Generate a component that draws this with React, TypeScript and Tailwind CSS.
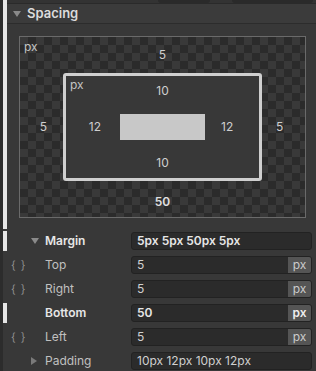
import React from 'react';

type Row = {
  label: string;
  value: string;
  unit?: boolean;
  active?: boolean;
  kind: 'group-open' | 'group-closed' | 'field';
};

const rows: Row[] = [
  { label: 'Margin', value: '5px 5px 50px 5px', kind: 'group-open', active: true },
  { label: 'Top', value: '5', unit: true, kind: 'field' },
  { label: 'Right', value: '5', unit: true, kind: 'field' },
  { label: 'Bottom', value: '50', unit: true, kind: 'field', active: true },
  { label: 'Left', value: '5', unit: true, kind: 'field' },
  { label: 'Padding', value: '10px 12px 10px 12px', kind: 'group-closed' },
];

const TriangleDown = () => (
  <svg width="8" height="6" viewBox="0 0 8 6">
    <polygon points="0,0 8,0 4,6" fill="#8a8a8a" />
  </svg>
);

const TriangleRight = () => (
  <svg width="6" height="8" viewBox="0 0 6 8">
    <polygon points="0,0 6,4 0,8" fill="#7a7a7a" />
  </svg>
);

const SpacingBox: React.FC = () => (
  <div className="ml-[12px] w-[287px] h-[182px] border border-[#6a6a6a] bg-[image:repeating-conic-gradient(#2b2b2b_0%_25%,#393939_0%_50%)] bg-[length:16px_16px] grid grid-cols-[43px_199px_43px] grid-rows-[36px_108px_36px] text-[12px] leading-4 text-[#cfcfcf]">
    <div className="pl-[4px] pt-[2px] text-[#c4c4c4]">px</div>
    <div className="flex justify-center pt-[10px]">5</div>
    <div />

    <div className="flex items-center justify-end pr-[16px]">5</div>
    <div className="border-[3px] border-[#cfcfcf] rounded-[3px] bg-[#383838] grid grid-cols-[54px_85px_54px] grid-rows-[38px_26px_38px]">
      <div className="pl-[4px] pt-[1px] text-[#c4c4c4]">px</div>
      <div className="flex justify-center pt-[7px]">10</div>
      <div />
      <div className="flex items-center justify-end pr-[19px]">12</div>
      <div className="bg-[#c8c8c8]" />
      <div className="flex items-center pl-[16px]">12</div>
      <div />
      <div className="flex justify-center pt-[15px]">10</div>
      <div />
    </div>
    <div className="flex items-center pl-[14px]">5</div>

    <div />
    <div className="flex justify-center pt-[13px] font-semibold text-[#e0e0e0]">50</div>
    <div />
  </div>
);

const PropertyRow: React.FC<{ row: Row }> = ({ row }) => (
  <div className="flex items-center h-[24px]">
    <div className="w-[3px] h-full bg-[#2c2c2c]" />
    <div className={`w-[4px] h-[20px] ${row.active ? 'bg-[#e6e6e6]' : ''}`} />
    <div className="w-[24px] pl-[4px] text-[11px] leading-none tracking-[1px] text-[#8f8f8f]">
      {row.kind === 'field' && !row.active ? '{ }' : ''}
    </div>
    <div className="w-[14px] flex items-center">
      {row.kind === 'group-open' && <TriangleDown />}
      {row.kind === 'group-closed' && <TriangleRight />}
    </div>
    <div
      className={`w-[86px] text-[12px] ${
        row.active ? 'font-semibold text-[#e6e6e6]' : 'text-[#c0c0c0]'
      }`}
    >
      {row.label}
    </div>
    <div className="w-[181px] h-[18px] flex border border-[#222222] rounded-[3px] bg-[#2b2b2b] overflow-hidden">
      <div
        className={`flex-1 pl-[5px] text-[12px] leading-4 ${
          row.active ? 'font-semibold text-[#e6e6e6]' : 'text-[#d0d0d0]'
        }`}
      >
        {row.value}
      </div>
      {row.unit && (
        <div
          className={`w-[23px] bg-[#555555] text-center text-[12px] leading-4 ${
            row.active ? 'font-semibold text-[#eeeeee]' : 'text-[#cccccc]'
          }`}
        >
          px
        </div>
      )}
    </div>
  </div>
);

export default function App() {
  return (
    <div className="w-[316px] h-[371px] overflow-hidden bg-[#383838] font-['Inter',sans-serif]">
      <div className="flex h-[229px]">
        <div className="w-[3px] bg-[#2c2c2c]" />
        <div className="w-[4px] bg-[#e6e6e6]" />
        <div className="flex-1 flex flex-col">
          <div className="h-[4px] flex bg-[#333333] border-b border-[#2a2a2a]">
            <div className="ml-[151px] w-[52px] h-[3px] rounded-b-[3px] bg-[#2a2a2a]" />
            <div className="ml-[22px] w-[81px] h-[3px] rounded-b-[3px] bg-[#2a2a2a]" />
          </div>
          <div className="h-[20px] flex items-center bg-[#3b3b3b] border-b border-[#2c2c2c]">
            <div className="ml-[6px] w-[14px]">
              <TriangleDown />
            </div>
            <span className="text-[13px] font-semibold text-[#dcdcdc]">Spacing</span>
          </div>
          <div className="pt-[12px] pb-[10px]">
            <SpacingBox />
          </div>
        </div>
      </div>
      {rows.map((row) => (
        <PropertyRow key={row.label} row={row} />
      ))}
    </div>
  );
}
